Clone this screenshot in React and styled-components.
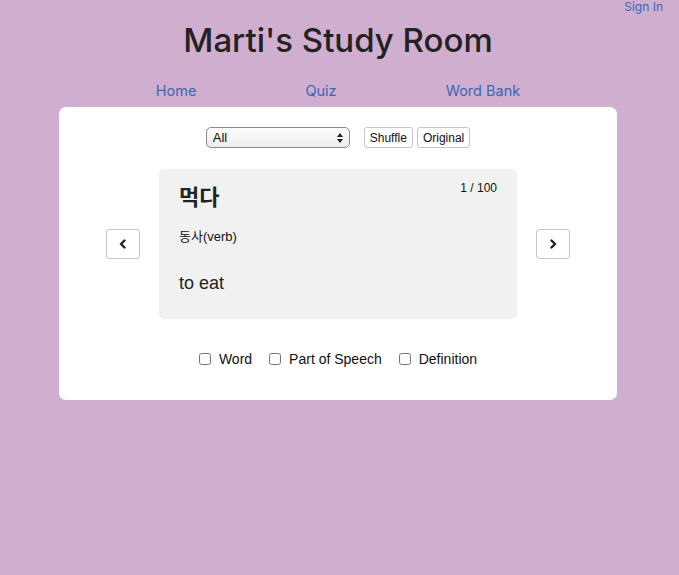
import React, { useState } from 'react';
import styled, { createGlobalStyle } from 'styled-components';

const GlobalStyle = createGlobalStyle`
  body {
    margin: 0;
    background-color: #d0aecf;
    font-family: "Liberation Sans", Arial, sans-serif;
  }
`;

const Page = styled.div`
  min-height: 100vh;
  box-sizing: border-box;
  background-color: #d0aecf;
  padding-right: 3px;
`;

const TopBar = styled.div`
  display: flex;
  justify-content: flex-end;
  padding: 0 13px 0 0;
  height: 14px;
`;

const SignIn = styled.a`
  font-family: Inter, "Noto Sans", sans-serif;
  font-size: 12px;
  line-height: 14px;
  color: #3a67b4;
  cursor: pointer;
`;

const Title = styled.h1`
  margin: 4px 0 0;
  text-align: center;
  font-family: Inter, "Noto Sans", sans-serif;
  font-weight: 500;
  font-size: 33px;
  line-height: 44px;
  color: #222;
  letter-spacing: 0;
`;

const Nav = styled.nav`
  display: flex;
  justify-content: center;
  gap: 109px;
  margin-top: 20px;
  height: 25px;
`;

const NavLink = styled.a`
  font-family: Inter, "Noto Sans", sans-serif;
  font-size: 14.5px;
  line-height: 18px;
  color: #3a67b4;
  cursor: pointer;
`;

const Panel = styled.main`
  width: 558px;
  margin: 0 auto;
  background: #fff;
  border-radius: 7px;
  padding: 20px 0 33px;
  box-sizing: border-box;
  display: flex;
  flex-direction: column;
  align-items: center;
`;

const Controls = styled.div`
  display: flex;
  align-items: center;
  gap: 4px;
`;

const Select = styled.select`
  width: 144px;
  height: 21px;
  margin-right: 10px;
  padding: 0 6px;
  font-family: "Liberation Sans", Arial, sans-serif;
  font-size: 13px;
  color: #111;
  border: 1px solid #8a8a8a;
  border-radius: 5px;
  appearance: none;
  background-image: url("data:image/svg+xml;utf8,<svg xmlns='http://www.w3.org/2000/svg' width='8' height='12'><path d='M4 1 L7 5 H1 Z M4 11 L7 7 H1 Z' fill='%23222'/></svg>"), linear-gradient(#fdfdfd, #ececec);
  background-repeat: no-repeat;
  background-position: right 5px center, 0 0;
`;

const SmallButton = styled.button`
  height: 21px;
  padding: 0 5px;
  font-family: "Liberation Sans", Arial, sans-serif;
  font-size: 12px;
  color: #111;
  background: #fff;
  border: 1px solid #c6c6c6;
  border-radius: 3px;
`;

const CardRow = styled.div`
  display: flex;
  align-items: center;
  gap: 19px;
  margin-top: 21px;
`;

const ArrowButton = styled.button`
  width: 34px;
  height: 30px;
  display: flex;
  align-items: center;
  justify-content: center;
  padding: 0;
  background: #fff;
  border: 1px solid #c6c6c6;
  border-radius: 3px;
  cursor: pointer;
`;

const FlashCard = styled.div`
  width: 358px;
  height: 150px;
  box-sizing: border-box;
  background: #f1f1f1;
  border-radius: 5px;
  padding: 12px 20px;
  display: flex;
  flex-direction: column;
`;

const CardHead = styled.div`
  display: flex;
  justify-content: space-between;
  align-items: flex-start;
`;

const Word = styled.div`
  font-family: "Noto Sans CJK KR", sans-serif;
  font-weight: 700;
  font-size: 22px;
  line-height: 28px;
  color: #222;
`;

const Counter = styled.div`
  font-size: 12px;
  line-height: 14px;
  margin-top: 0;
  color: #111;
`;

const Pos = styled.div`
  margin-top: 20px;
  font-family: "Liberation Sans", "Noto Sans CJK KR", sans-serif;
  font-size: 13px;
  line-height: 16px;
  color: #111;
`;

const Definition = styled.div`
  margin-top: 27px;
  font-size: 18px;
  line-height: 22px;
  color: #222;
`;

const Toggles = styled.div`
  display: flex;
  align-items: center;
  gap: 17px;
  margin-top: 32px;
`;

const Toggle = styled.label`
  display: flex;
  align-items: center;
  gap: 8px;
  font-size: 14px;
  color: #111;
`;

const Box = styled.input`
  margin: 0;
  width: 12px;
  height: 12px;
`;

const Chevron = ({ dir }) => (
  <svg width="10" height="10" viewBox="0 0 10 10">
    <path
      d={dir === 'left' ? 'M6.5 1.5 L3 5 L6.5 8.5' : 'M3.5 1.5 L7 5 L3.5 8.5'}
      fill="none"
      stroke="#222"
      strokeWidth="2.4"
      strokeLinecap="round"
      strokeLinejoin="round"
    />
  </svg>
);

const App = () => {
  const [shown, setShown] = useState({ word: false, pos: false, def: false });

  const flip = (key) => setShown({ ...shown, [key]: !shown[key] });

  return (
    <Page>
      <GlobalStyle />
      <TopBar>
        <SignIn>Sign In</SignIn>
      </TopBar>
      <Title>Marti's Study Room</Title>
      <Nav>
        <NavLink>Home</NavLink>
        <NavLink>Quiz</NavLink>
        <NavLink>Word Bank</NavLink>
      </Nav>
      <Panel>
        <Controls>
          <Select defaultValue="all">
            <option value="all">All</option>
          </Select>
          <SmallButton>Shuffle</SmallButton>
          <SmallButton>Original</SmallButton>
        </Controls>
        <CardRow>
          <ArrowButton aria-label="previous">
            <Chevron dir="left" />
          </ArrowButton>
          <FlashCard>
            <CardHead>
              <Word>먹다</Word>
              <Counter>1 / 100</Counter>
            </CardHead>
            <Pos>동사(verb)</Pos>
            <Definition>to eat</Definition>
          </FlashCard>
          <ArrowButton aria-label="next">
            <Chevron dir="right" />
          </ArrowButton>
        </CardRow>
        <Toggles>
          <Toggle>
            <Box type="checkbox" checked={shown.word} onChange={() => flip('word')} />
            Word
          </Toggle>
          <Toggle>
            <Box type="checkbox" checked={shown.pos} onChange={() => flip('pos')} />
            Part of Speech
          </Toggle>
          <Toggle>
            <Box type="checkbox" checked={shown.def} onChange={() => flip('def')} />
            Definition
          </Toggle>
        </Toggles>
      </Panel>
    </Page>
  );
};

export default App;
